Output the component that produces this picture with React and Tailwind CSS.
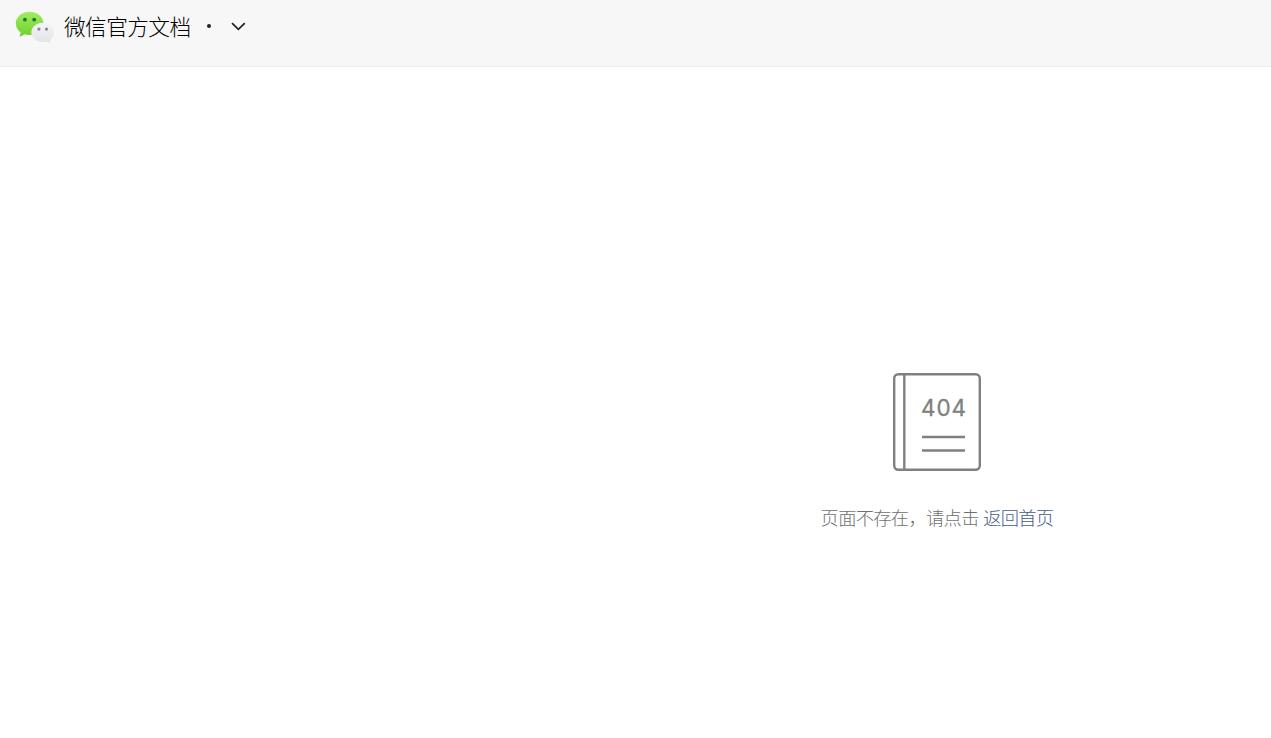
import React from 'react';

const WechatLogo = () => (
  <svg width="40" height="34" viewBox="0 0 40 34" className="mt-px shrink-0">
    <defs>
      <linearGradient id="bubble-green" x1="0" y1="0" x2="0" y2="1">
        <stop offset="0" stopColor="#a0ee5e" />
        <stop offset="1" stopColor="#70cf30" />
      </linearGradient>
      <linearGradient id="bubble-white" x1="0" y1="0" x2="0" y2="1">
        <stop offset="0" stopColor="#f4f5f9" />
        <stop offset="1" stopColor="#e1e3e7" />
      </linearGradient>
    </defs>
    <path
      d="M14.700 1.700C6.900 1.700 .8 6.900 .8 13.400c0 3.600 1.900 6.800 4.900 9l-1 3.500c-.1.600.4.800.9.500l4-2.200c1.500.5 3.200.8 4.900.8 7.900 0 14-5.100 14-11.600S22.500 1.700 14.700 1.700z"
      fill="url(#bubble-green)"
    />
    <circle cx="9.900" cy="9.700" r="1.900" fill="#187a2b" />
    <circle cx="19.200" cy="9.700" r="1.900" fill="#187a2b" />
    <path
      d="M27.700 12.700c-6.300 0-11.400 4.400-11.400 9.700s5.100 9.600 11.400 9.600c1.400 0 2.700-.2 3.900-.6l3.300 1.300c.4.200.7 0 .6-.5l-.7-2.500c2.600-1.800 4.200-4.400 4.200-7.300 0-5.300-5-9.700-11.300-9.700z"
      fill="url(#bubble-white)"
    />
    <circle cx="23.900" cy="19.100" r="1.600" fill="#858a92" />
    <circle cx="31.500" cy="19.100" r="1.600" fill="#858a92" />
  </svg>
);

const ChevronDown = () => (
  <svg width="16" height="10" viewBox="0 0 16 10" fill="none" className="ml-[19px] shrink-0">
    <path d="M2 2.100 8.400 8.400l6.400-6.300" stroke="#222" strokeWidth="1.700" />
  </svg>
);

const NotFoundBook = () => (
  <svg width="88" height="98" viewBox="0 0 88 98" fill="none" className="shrink-0">
    <rect x="1.200" y="1.200" width="85.600" height="95.600" rx="4.200" stroke="#808080" strokeWidth="2.400" />
    <path d="M11.300 1v96" stroke="#808080" strokeWidth="2.400" />
    <text
      x="28.100"
      y="42.800"
      fill="#808080"
      stroke="#808080"
      strokeWidth="0.300"
      className="font-[Inter,sans-serif] text-[22.500px] font-normal tracking-[0.800px]"
    >
      404
    </text>
    <path d="M29 64h43M29 77.500h43" stroke="#808080" strokeWidth="2.400" />
  </svg>
);

export default function App() {
  return (
    <div className="flex h-screen flex-col bg-white font-['Noto_Sans_CJK_SC',sans-serif] font-light">
      <header className="flex h-[67px] shrink-0 items-start border-b border-[#ededed] bg-[#f7f7f7] pl-[15px]">
        <div className="flex h-[52px] items-center">
          <WechatLogo />
          <h1 className="ml-[9px] text-[21.700px] leading-[30px] tracking-[-0.6px] whitespace-nowrap text-black">
            微信官方文档
          </h1>
          <span className="ml-4 size-1 rounded-full bg-[#222]" />
          <ChevronDown />
        </div>
      </header>
      <main className="ml-[603px] flex flex-1 flex-col items-center pt-[306px]">
        <NotFoundBook />
        <p className="mt-[33px] text-[18.300px] leading-[26px] tracking-[-0.7px] whitespace-nowrap text-[#707070]">
          页面不存在，请点击 <a href="#" className="ml-px text-[#475a8a]">返回首页</a>
        </p>
      </main>
    </div>
  );
}
